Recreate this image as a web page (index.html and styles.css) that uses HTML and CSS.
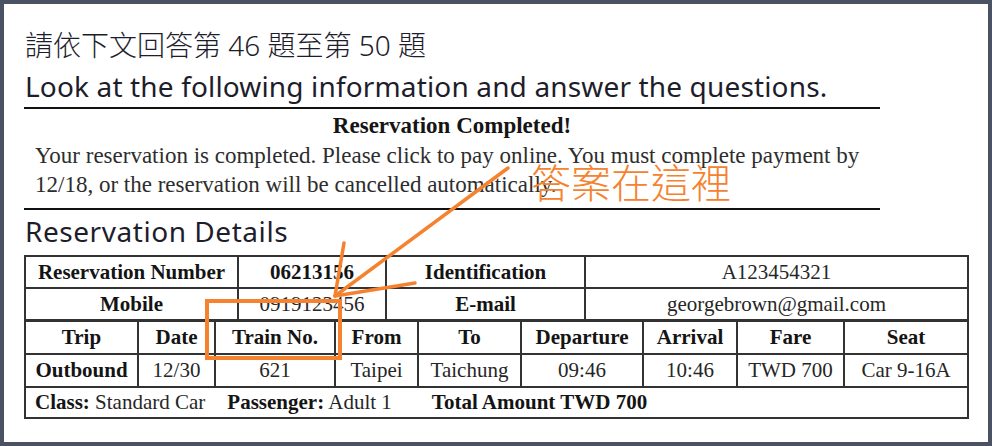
FILE: index.html
```html
<!DOCTYPE html>
<html lang="zh-Hant">
<head>
<meta charset="utf-8">
<title>Reservation</title>
<link rel="stylesheet" href="styles.css">
</head>
<body>
<div class="frame">
  <h1 class="zh">請依下文回答第 46 題至第 50 題</h1>
  <h2 class="en">Look at the following information and answer the questions.</h2>
  <div class="notice">
    <div class="notice-title">Reservation Completed!</div>
    <p class="notice-text">Your reservation is completed. Please click to pay online. You must complete payment by<br>12/18, or the reservation will be cancelled automatically.</p>
  </div>
  <h2 class="en details">Reservation Details</h2>
  <div class="resv">
    <div class="info">
      <div class="cell b">Reservation Number</div>
      <div class="cell b">06213156</div>
      <div class="cell b">Identification</div>
      <div class="cell">A123454321</div>
      <div class="cell b">Mobile</div>
      <div class="cell">0919123456</div>
      <div class="cell b">E-mail</div>
      <div class="cell">georgebrown@gmail.com</div>
    </div>
    <div class="trip">
      <div class="cell b">Trip</div>
      <div class="cell b">Date</div>
      <div class="cell b">Train No.</div>
      <div class="cell b">From</div>
      <div class="cell b">To</div>
      <div class="cell b">Departure</div>
      <div class="cell b">Arrival</div>
      <div class="cell b">Fare</div>
      <div class="cell b">Seat</div>
      <div class="cell b">Outbound</div>
      <div class="cell">12/30</div>
      <div class="cell">621</div>
      <div class="cell">Taipei</div>
      <div class="cell">Taichung</div>
      <div class="cell">09:46</div>
      <div class="cell">10:46</div>
      <div class="cell">TWD 700</div>
      <div class="cell">Car 9-16A</div>
      <div class="cell foot"><span class="seg"><b>Class:</b> Standard Car</span><span class="seg pass"><b>Passenger:</b> Adult 1</span><span class="seg total"><b>Total Amount TWD 700</b></span></div>
    </div>
  </div>
</div>
<svg class="annot" width="992" height="446" viewBox="0 0 992 446" aria-hidden="true">
  <g fill="none" stroke="#f5822e" stroke-width="3.5" stroke-linecap="round" stroke-linejoin="round">
    <line x1="508" y1="168" x2="335" y2="296"/>
    <line x1="344" y1="243" x2="335" y2="296"/>
    <line x1="415" y1="283" x2="335" y2="296"/>
    <rect x="207" y="301" width="133" height="57" stroke-width="4" stroke-linecap="butt" stroke-linejoin="miter"/>
  </g>
</svg>
<div class="answer">答案在這裡</div>
</body>
</html>
```
FILE: styles.css
```css
html, body {
  margin: 0;
  padding: 0;
  background: #ffffff;
}
body {
  position: relative;
  width: 992px;
  height: 446px;
  overflow: hidden;
}
.frame {
  box-sizing: border-box;
  width: 992px;
  height: 446px;
  border: 4px solid #4b5263;
  padding: 0 0 0 20px;
  background: #fff;
}
.zh {
  margin: 23px 0 0 1px;
  height: 36px;
  line-height: 36px;
  font-family: "Noto Sans", "Noto Sans CJK TC", sans-serif;
  font-size: 28px;
  font-weight: 300;
  color: #1d1d2b;
  white-space: nowrap;
}
.en {
  margin: 5px 0 0 1px;
  height: 36px;
  line-height: 36px;
  font-family: "Noto Sans", sans-serif;
  font-size: 28px;
  font-weight: 400;
  letter-spacing: 0.15px;
  color: #1d1d2b;
  white-space: nowrap;
}
.notice {
  width: 856px;
  margin-top: 3px;
  border-top: 2px solid #111;
  border-bottom: 2px solid #111;
  padding: 5px 0 9px 0;
  font-family: "Liberation Serif", serif;
}
.notice-title {
  text-align: center;
  font-weight: 700;
  font-size: 23px;
  line-height: 24px;
  color: #151515;
}
.notice-text {
  margin: 3px 0 0 0;
  padding-left: 11px;
  font-size: 23px;
  line-height: 29px;
  color: #2d2d2d;
  white-space: nowrap;
}
.en.details {
  margin-top: 3px;
  letter-spacing: 0.55px;
}
.resv {
  box-sizing: border-box;
  width: 945px;
  margin-top: 6px;
  border: 2px solid #333;
  font-family: "Liberation Serif", serif;
  font-size: 21px;
  color: #262626;
}
.info {
  display: grid;
  grid-template-columns: 211px 146px 197px 381px;
  grid-auto-rows: 30px;
  gap: 2px;
  background: #333;
}
.trip {
  display: grid;
  grid-template-columns: 111px 75px 118px 81px 101px 120px 92px 105px 122px;
  grid-template-rows: 31px 31px 29px;
  gap: 2px;
  background: #333;
  border-top: 3px solid #333;
}
.cell {
  background: #fff;
  display: flex;
  align-items: center;
  justify-content: center;
  white-space: nowrap;
  line-height: 1;
}
.cell.b, .cell b {
  font-weight: 700;
  color: #141414;
}
.cell.foot {
  grid-column: 1 / -1;
  justify-content: flex-start;
  padding-left: 9px;
}
.pass {
  margin-left: 22px;
}
.total {
  margin-left: 40px;
}
.annot {
  position: absolute;
  left: 0;
  top: 0;
  pointer-events: none;
}
.answer {
  position: absolute;
  left: 531px;
  top: 161px;
  font-family: "Noto Sans CJK TC", sans-serif;
  font-size: 40px;
  font-weight: 300;
  line-height: 40px;
  color: #f5822e;
  white-space: nowrap;
}
```
